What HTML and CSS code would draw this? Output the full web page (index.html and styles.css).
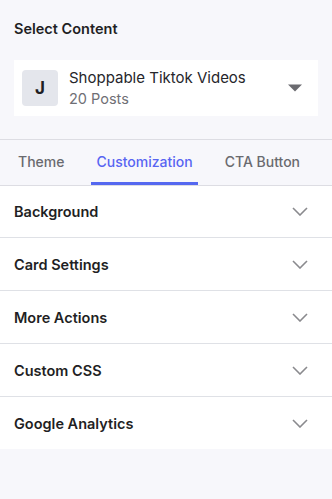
FILE: index.html
```html
<!DOCTYPE html>
<html>
<head>
<meta charset="utf-8">
<link rel="stylesheet" href="styles.css">
</head>
<body>
<div class="panel">
  <section class="select">
    <h2 class="select-title">Select Content</h2>
    <div class="source-card">
      <div class="avatar">J</div>
      <div class="source-info">
        <div class="source-name">Shoppable Tiktok Videos</div>
        <div class="source-count">20 Posts</div>
      </div>
      <svg class="caret" width="14" height="8" viewBox="0 0 14 8"><path d="M0 0.5 H14 L7 7.5 Z" fill="#6b6b70"/></svg>
    </div>
  </section>
  <nav class="tabs">
    <div class="tab">Theme</div>
    <div class="tab active">Customization</div>
    <div class="tab">CTA Button</div>
  </nav>
  <div class="accordion">
    <div class="row"><span>Background</span><svg class="chev" width="16" height="9" viewBox="0 0 16 9"><path d="M1 1 L8 8 L15 1" fill="none" stroke="#8a8a8e" stroke-width="1.6"/></svg></div>
    <div class="row"><span>Card Settings</span><svg class="chev" width="16" height="9" viewBox="0 0 16 9"><path d="M1 1 L8 8 L15 1" fill="none" stroke="#8a8a8e" stroke-width="1.6"/></svg></div>
    <div class="row"><span>More Actions</span><svg class="chev" width="16" height="9" viewBox="0 0 16 9"><path d="M1 1 L8 8 L15 1" fill="none" stroke="#8a8a8e" stroke-width="1.6"/></svg></div>
    <div class="row"><span>Custom CSS</span><svg class="chev" width="16" height="9" viewBox="0 0 16 9"><path d="M1 1 L8 8 L15 1" fill="none" stroke="#8a8a8e" stroke-width="1.6"/></svg></div>
    <div class="row"><span>Google Analytics</span><svg class="chev" width="16" height="9" viewBox="0 0 16 9"><path d="M1 1 L8 8 L15 1" fill="none" stroke="#8a8a8e" stroke-width="1.6"/></svg></div>
  </div>
</div>
</body>
</html>
```
FILE: styles.css
```css
* { box-sizing: border-box; }
html, body { margin: 0; padding: 0; }
body {
  background: #f7f7fb;
  font-family: Inter, "Noto Sans", sans-serif;
  color: #1f1f24;
  width: 332px;
  height: 499px;
  overflow: hidden;
}
.select { padding: 19px 14px 23px; border-bottom: 1px solid #dddde3; }
.select-title {
  margin: 0;
  font-size: 14.5px;
  font-weight: 600;
  line-height: 20px;
  color: #1f1f24;
}
.source-card {
  margin-top: 21px;
  background: #fff;
  height: 56px;
  display: flex;
  align-items: center;
  padding: 0 16px 0 8px;
}
.avatar {
  width: 36px;
  height: 36px;
  border-radius: 4px;
  background: #e4e6ec;
  display: flex;
  align-items: center;
  justify-content: center;
  font-weight: 700;
  font-size: 17px;
  color: #1f1f24;
}
.source-info { margin-left: 11px; flex: 1; }
.source-name { font-size: 15px; line-height: 20px; color: #26262b; }
.source-count { font-size: 14.5px; line-height: 20px; color: #6f6f75; margin-top: 1px; }
.caret { display: block; }
.tabs {
  display: flex;
  gap: 22px;
  padding: 0 13px;
  height: 46px;
  border-bottom: 1px solid #dddde3;
}
.tab {
  padding: 0 5px;
  font-size: 14px;
  font-weight: 500;
  color: #6a6a6f;
  display: flex;
  align-items: center;
  border-bottom: 3px solid transparent;
}
.tab.active { color: #5865f2; border-bottom-color: #5568f0; }
.accordion { background: #fff; }
.row {
  height: 53px;
  display: flex;
  align-items: center;
  justify-content: space-between;
  padding: 0 24px 0 14px;
  border-bottom: 1px solid #dfe1e6;
  font-size: 14.5px;
  font-weight: 600;
  color: #1f1f24;
}
.row:first-child { height: 52px; }
.row:last-child { border-bottom: none; height: 52px; }
.chev { display: block; }
```
